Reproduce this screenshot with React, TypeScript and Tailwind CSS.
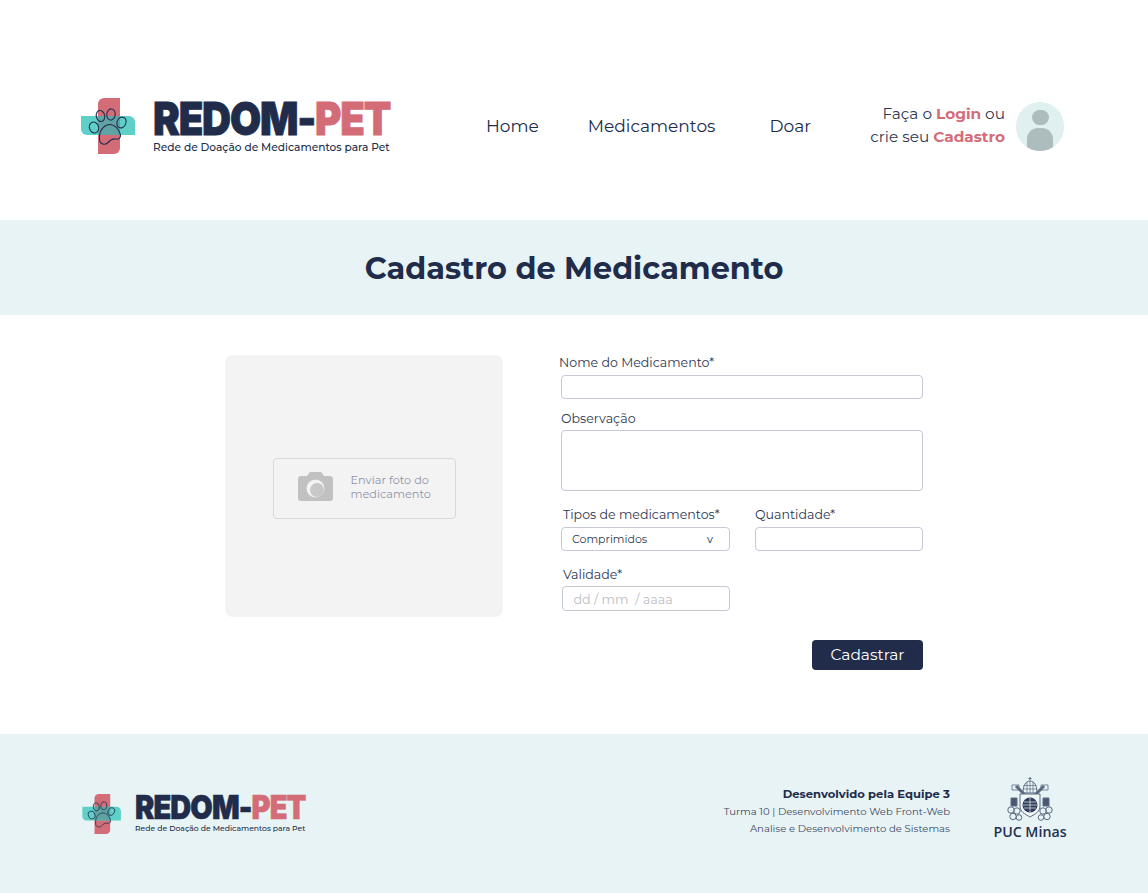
const font = { fontFamily: 'Montserrat, Inter, sans-serif' }

function LogoIcon({ className }: { className: string }) {
  return (
    <svg viewBox="0 0 55 56" className={className}>
      <path d="M23 0H39V50A6 6 0 0 1 33 56H17V6A6 6 0 0 1 23 0Z" fill="#d46c78" />
      <path d="M0 18H48A6 6 0 0 1 54 24V37H6A6 6 0 0 1 0 31Z" fill="#5fd0c8" />
      <path d="M17 18H39V37H17Z" fill="#5fa3a3" />
      <g fill="none" stroke="#24304f" strokeWidth="1.1">
        <ellipse cx="19.5" cy="18" rx="4.2" ry="5.6" transform="rotate(-12 19.5 18)" />
        <ellipse cx="30" cy="16.5" rx="4.2" ry="5.6" transform="rotate(8 30 16.5)" />
        <ellipse cx="40.5" cy="24.5" rx="4.4" ry="5.6" transform="rotate(25 40.5 24.5)" />
        <ellipse cx="13" cy="29.5" rx="4.6" ry="5.6" transform="rotate(-18 13 29.5)" />
        <path d="M18.5 38C19 31 24 26.5 29 26.5C34 26.5 38.5 32 39.5 37C40 40.5 37 41.5 34.5 41C31 40.5 29.5 42 27 44.5C24 47.5 19 46.5 18.5 42Z" />
      </g>
    </svg>
  )
}

function PucLogo() {
  return (
    <svg viewBox="0 0 46 45" className="h-[45px] w-[46px]">
      <g fill="none" stroke="#5d6a82" strokeWidth="1">
        <path d="M16 16C16 8 19 4 23 4C27 4 30 8 30 16Z" />
        <path d="M16.5 8.5H29.5M16 12H30M20 5V16M26 5V16M23 4V16" strokeWidth="0.7" />
        <path d="M23 0V3.5M21.5 1.5H24.5" strokeWidth="1" />
        <path d="M9 9L19 19M37 9L27 19" strokeWidth="3" />
        <path d="M5 8H12V13H5ZM34 8H41V13H34Z" strokeWidth="0.8" />
        <path d="M13 17H33V29C33 35 28 37 23 40C18 37 13 35 13 29Z" fill="#eef6f6" />
        <path d="M4 21H10V29H4ZM36 21H42V29H36Z" fill="#4a5872" />
        <circle cx="4" cy="33" r="3.2" />
        <circle cx="10" cy="34" r="3.2" />
        <circle cx="6" cy="39.5" r="3.2" />
        <circle cx="12" cy="40.5" r="2.8" />
        <circle cx="42" cy="33" r="3.2" />
        <circle cx="36" cy="34" r="3.2" />
        <circle cx="40" cy="39.5" r="3.2" />
        <circle cx="34" cy="40.5" r="2.8" />
      </g>
      <circle cx="23" cy="28" r="7.5" fill="#2f3b58" />
      <path d="M17 25H29M16 28H30M17 31H29M23 21V35" stroke="#e6f2f2" strokeWidth="0.7" />
    </svg>
  )
}

function Field({ label, labelClass, className, children }: { label: string; labelClass?: string; className?: string; children: React.ReactNode }) {
  return (
    <div className={className}>
      <p className={`whitespace-nowrap text-[12.6px] leading-[17px] text-[#2c3753] ${labelClass ?? ''}`}>{label}</p>
      {children}
    </div>
  )
}

const boxClass = 'block rounded border border-[#c6c8d6] bg-white outline-none'

export default function App() {
  return (
    <div className="min-h-[893px] bg-white text-[#202c4a]" style={font}>
      <header className="flex h-[220px] items-center pl-[81px] pt-[32px]">
        <div className="flex w-[309px] items-center gap-[17px]">
          <LogoIcon className="h-[56px] w-[55px] shrink-0" />
          <div className="w-[238px] pt-[4px]" style={{ fontFamily: 'Inter, sans-serif' }}>
            <p className="origin-left scale-x-[0.875] whitespace-nowrap text-[46px] font-black leading-[33px] tracking-[-1.4px] [-webkit-text-stroke:0.8px_currentColor]">
              REDOM-<span className="text-[#d46c78]">PET</span>
            </p>
            <p className="mt-[6px] whitespace-nowrap text-[10.65px] font-medium leading-[14px]" style={font}>
              Rede de Doação de Medicamentos para Pet
            </p>
          </div>
        </div>
        <nav className="ml-[96px] flex w-[325px] pt-[2px] text-[17px]">
          <a className="w-[102px]">Home</a>
          <a className="w-[182px]">Medicamentos</a>
          <a>Doar</a>
        </nav>
        <div className="ml-[59px] flex items-center gap-[11px]">
          <p className="w-[135px] whitespace-nowrap pb-[2px] text-right text-[15.3px] leading-[23px] text-[#2c3753]">
            Faça o <b className="font-bold text-[#d46c78]">Login</b> ou
            <br />
            crie seu <b className="font-bold text-[#d46c78]">Cadastro</b>
          </p>
          <div className="flex h-[49px] w-[48px] flex-col items-center overflow-hidden rounded-full bg-[#e0efef] pt-[8px]">
            <div className="h-[17px] w-[17px] rounded-full bg-[#adbcbc]" />
            <div className="mt-[3px] h-[24px] w-[26px] rounded-t-[11px] bg-[#adbcbc]" />
          </div>
        </div>
      </header>

      <div className="flex h-[95px] items-center justify-center bg-[#e7f3f4] pt-[2px]">
        <h1 className="text-[30.3px] font-bold">Cadastro de Medicamento</h1>
      </div>

      <main className="flex h-[419px] pl-[225px] pt-[40px]">
        <div className="flex h-[262px] w-[278px] items-center justify-center rounded-lg bg-[#f3f3f3] pt-[5px]">
          <div className="flex h-[61px] w-[183px] items-center rounded border border-[#d8d8d8] pb-[4px] pl-[24px]">
            <svg viewBox="0 0 35 29" className="h-[29px] w-[35px]">
              <path
                d="M3 4H9L11 1C11.5 0.3 12 0 13 0H22C23 0 23.5 0.3 24 1L26 4H32C33.7 4 35 5.3 35 7V26C35 27.7 33.7 29 32 29H3C1.3 29 0 27.7 0 26V7C0 5.3 1.3 4 3 4Z"
                fill="#c1c1c1"
              />
              <circle cx="17.5" cy="16.5" r="9" fill="#f3f3f3" />
              <circle cx="19" cy="18" r="7" fill="#c8c8c8" />
            </svg>
            <p className="ml-[18px] text-[11.3px] leading-[14px] text-[#9093ab]">
              Enviar foto do
              <br />
              medicamento
            </p>
          </div>
        </div>

        <div className="ml-[56px] w-[364px]">
          <Field label="Nome do Medicamento*" labelClass="-translate-y-[1px]">
            <input className={`${boxClass} ml-[2px] mt-[3px] h-[24px] w-[362px]`} />
          </Field>
          <Field label="Observação" className="ml-[2px] mt-[11px]">
            <textarea className={`${boxClass} mt-[3px] h-[61px] w-[362px] resize-none`} />
          </Field>
          <div className="ml-[2px] mt-[15px] flex gap-[25px]">
            <Field label="Tipos de medicamentos*" labelClass="pl-[2px]" className="w-[169px]">
              <div className={`${boxClass} mt-[4px] flex h-[24px] items-center justify-between pl-[10px] pr-[16px] text-[11px]`}>
                <span className="text-[#2c3753]">Comprimidos</span>
                <span>v</span>
              </div>
            </Field>
            <Field label="Quantidade*" className="w-[168px]">
              <input className={`${boxClass} mt-[4px] h-[24px] w-[168px]`} />
            </Field>
          </div>
          <Field label="Validade*" labelClass="pl-[1px]" className="ml-[3px] mt-[15px] w-[168px]">
            <input
              placeholder="dd / mm  / aaaa"
              className={`${boxClass} mt-[3px] h-[25px] w-[168px] pl-[10.5px] pt-[1px] text-[12.7px] placeholder:text-[#bcbcc4]`}
            />
          </Field>
          <div className="mt-[29px] flex justify-end">
            <button className="h-[30px] w-[111px] rounded bg-[#202c4a] text-[15.4px] text-white">Cadastrar</button>
          </div>
        </div>
      </main>

      <footer className="flex h-[159px] items-center bg-[#e7f3f4] pl-[82px]">
        <div className="flex w-[225px] items-center gap-[13px]">
          <LogoIcon className="h-[40px] w-[40px] shrink-0" />
          <div className="w-[172px] pt-[1px]" style={{ fontFamily: 'Inter, sans-serif' }}>
            <p className="origin-left scale-x-[0.877] whitespace-nowrap text-[33px] font-black leading-[24px] tracking-[-1px] [-webkit-text-stroke:0.6px_currentColor]">
              REDOM-<span className="text-[#d46c78]">PET</span>
            </p>
            <p className="mt-[4px] whitespace-nowrap text-[7.67px] font-medium leading-[11px]" style={font}>
              Rede de Doação de Medicamentos para Pet
            </p>
          </div>
        </div>
        <div className="mb-[5px] ml-[393px] w-[250px] text-right text-[10.1px] leading-[17px] text-[#3f4a64]">
          <p className="text-[11.6px] font-bold text-[#202c4a]">Desenvolvido pela Equipe 3</p>
          <p>Turma 10 | Desenvolvimento Web Front-Web</p>
          <p>Analise e Desenvolvimento de Sistemas</p>
        </div>
        <div className="mb-[10px] ml-[44px] flex w-[72px] flex-col items-center">
          <PucLogo />
          <p className="mt-[1px] whitespace-nowrap text-[14.2px] font-semibold leading-[17px] text-[#24304f]" style={{ fontFamily: '"Open Sans", sans-serif' }}>
            PUC Minas
          </p>
        </div>
      </footer>
    </div>
  )
}
